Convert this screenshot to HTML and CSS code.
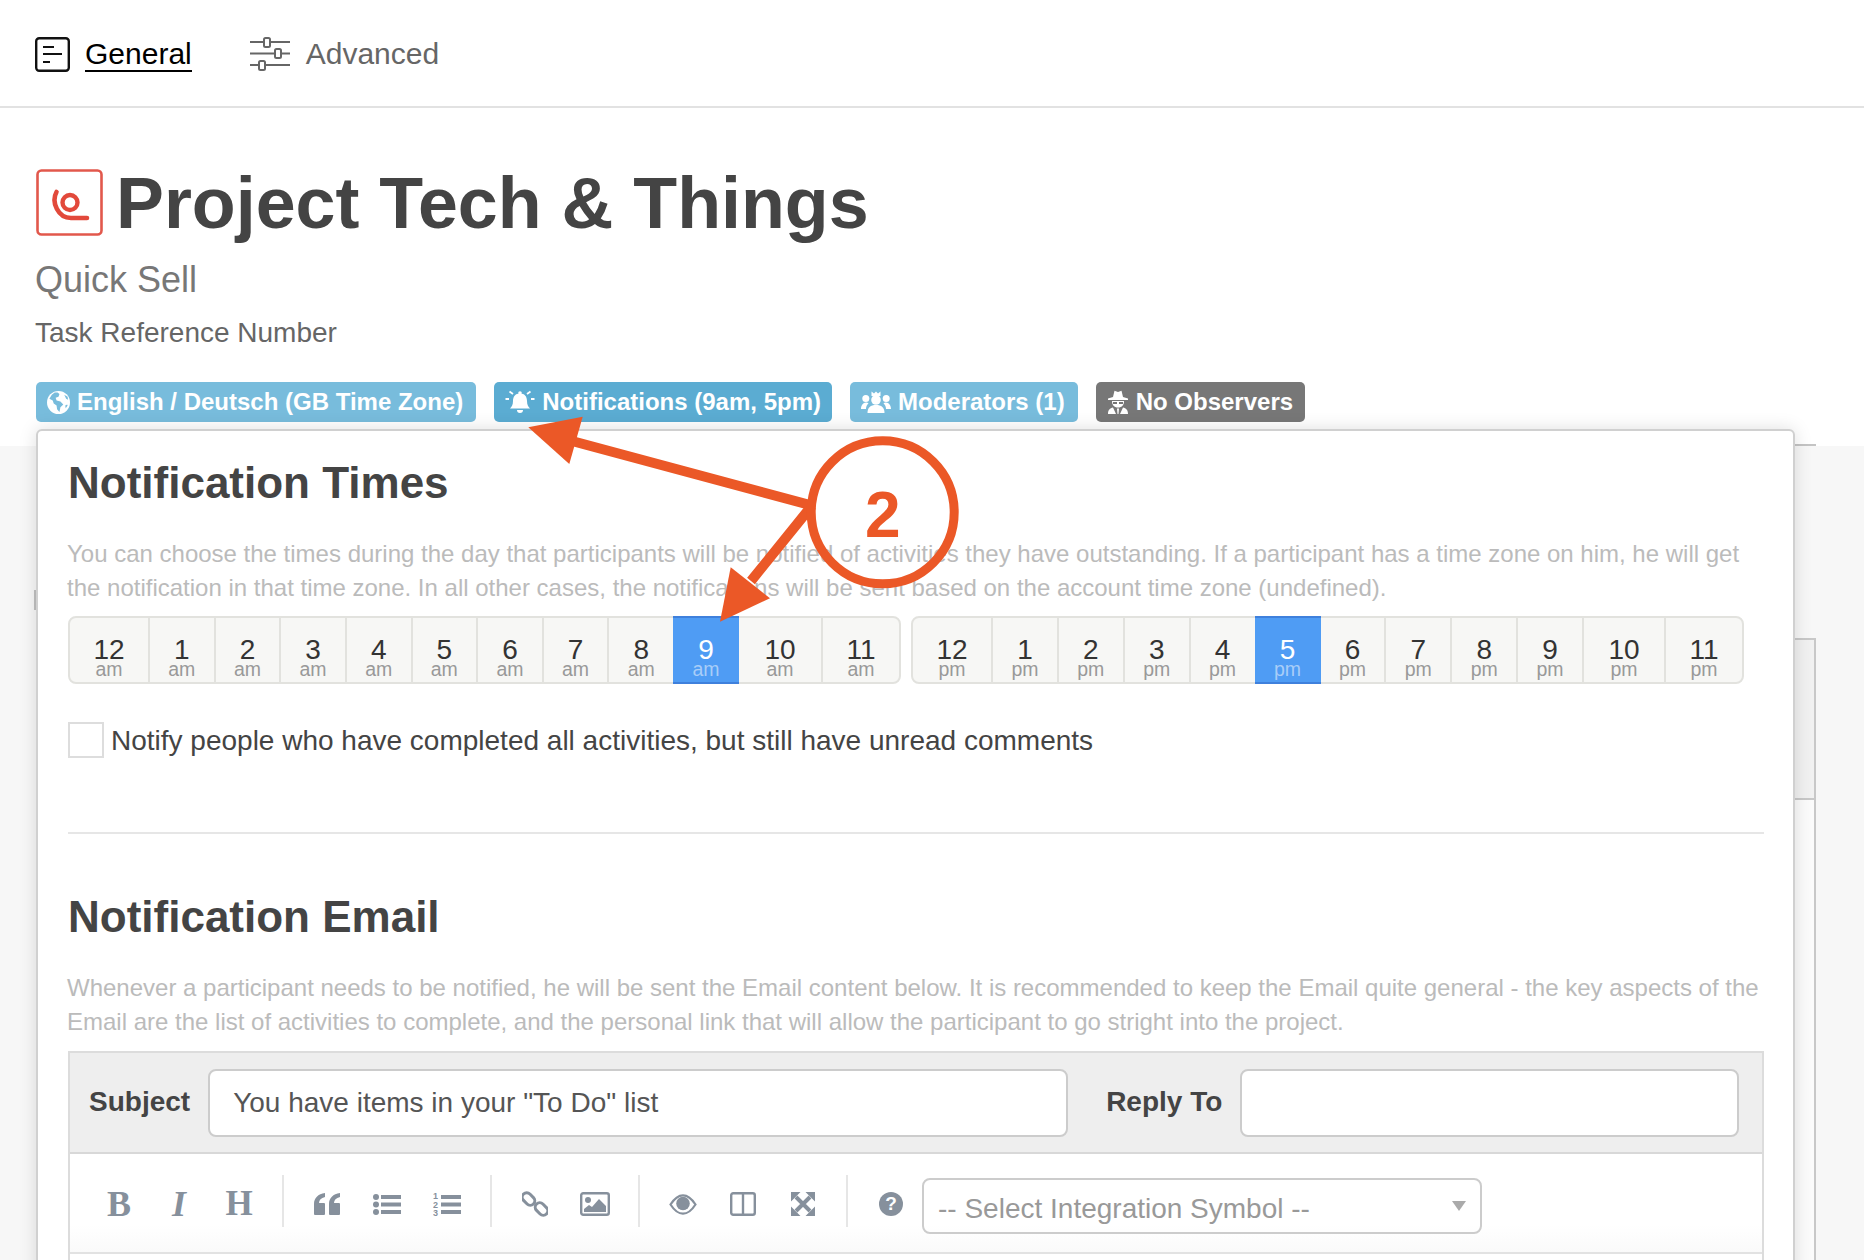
FILE: index.html
```html
<!DOCTYPE html>
<html lang="en">
<head>
<meta charset="utf-8">
<title>Project Tech &amp; Things</title>
<link rel="stylesheet" href="styles.css">
</head>
<body>
<div class="page">
  <nav class="tabs">
    <a class="tab tab-active">
      <svg class="tab-icon" width="35" height="35" viewBox="0 0 35 35"><rect x="1.2" y="1.2" width="32.6" height="32.6" rx="3" fill="none" stroke="#111" stroke-width="2.4"/><path d="M8 10h11M8 17h19M8 25h7" stroke="#111" stroke-width="2.2"/></svg>
      <span class="tab-label">General</span>
    </a>
    <a class="tab tab-muted">
      <svg class="tab-icon" width="40" height="35" viewBox="0 0 40 35"><path d="M0 5h14M20 5h20M0 16.5h25M31 16.5h9M0 28h9M15 28h25" stroke="#666" stroke-width="2"/><rect x="14" y="1" width="6" height="9" rx="1.5" fill="#fff" stroke="#666" stroke-width="2"/><rect x="25" y="12" width="6" height="9" rx="1.5" fill="#fff" stroke="#666" stroke-width="2"/><rect x="9" y="24" width="6" height="9" rx="1.5" fill="#fff" stroke="#666" stroke-width="2"/></svg>
      <span class="tab-label">Advanced</span>
    </a>
  </nav>

  <header class="head">
    <div class="title-row">
      <svg class="logo" width="67" height="67" viewBox="0 0 67 67"><rect x="1.5" y="1.5" width="64" height="64" rx="4" fill="#fff" stroke="#e2584c" stroke-width="2.6"/><circle cx="34" cy="33.5" r="7.5" fill="none" stroke="#e2493b" stroke-width="4.4"/><path d="M20.5 23C15 33 22 49 35 49H51" fill="none" stroke="#e2493b" stroke-width="4.6" stroke-linecap="round"/></svg>
      <h1 class="title">Project Tech &amp; Things</h1>
    </div>
    <div class="subtitle">Quick Sell</div>
    <div class="refnum">Task Reference Number</div>
    <div class="badges">
      <span class="badge badge-light badge-lang">
        <svg class="badge-icon" width="23" height="23" viewBox="0 0 24 24"><circle cx="12" cy="12" r="12" fill="#fff"/><path d="M8 1.5 5 4 2.5 8 6 10l1 3 3 2 .5 4 2.5 3 1-5 3-3-3-3-4-1-1-3 3-1 1-3-2-1.500zM18 4l2 4 2 1-.5-3zM19 15l2-1 .5 1-2 3z" fill="#78bcdc"/></svg>
        English / Deutsch (GB Time Zone)
      </span>
      <span class="badge badge-active">
        <svg class="badge-icon" width="30" height="24" viewBox="0 0 30 24"><circle cx="15" cy="3" r="1.800" fill="#fff"/><path d="M15 3.500c-5 0-7 3.500-7 7.500 0 4-1.500 6-3 7.500h20c-1.500-1.500-3-3.500-3-7.500 0-4-2-7.500-7-7.500z" fill="#fff"/><path d="M12 20h6a3 3 0 0 1-6 0z" fill="#fff"/><path d="M4.500 1.500 8 4M25.500 1.500 22 4M.5 9H4M26 9h3.500" stroke="#fff" stroke-width="1.800"/></svg>
        Notifications (9am, 5pm)
      </span>
      <span class="badge badge-light badge-mods">
        <svg class="badge-icon" width="30" height="24" viewBox="0 0 30 23"><path d="M10.500 1 13 3l2-2 2 2 2.500-2v4.500h-9z" fill="#fff"/><circle cx="15" cy="9.500" r="4.800" fill="#fff"/><path d="M6.500 22.500c0-5.500 3-8 8.500-8s8.500 2.500 8.500 8z" fill="#fff"/><circle cx="4.800" cy="8" r="3.500" fill="#fff"/><circle cx="25.200" cy="8" r="3.500" fill="#fff"/><path d="M0 18.500c0-3.500 2-6.500 5-6.500 1 0 2 .3 2.500.8C6 14.500 5 16 5 18.500zM30 18.500c0-3.500-2-6.500-5-6.500-1 0-2 .3-2.500.8C24 14.500 25 16 25 18.500z" fill="#fff"/></svg>
        Moderators (1)
      </span>
      <span class="badge badge-gray">
        <svg class="badge-icon" width="22" height="24" viewBox="0 0 22 24"><path d="M6 7 7.500.8 11 2l3.500-1.200L16 7l5 1.500V10H1V8.500z" fill="#fff"/><path d="M5 11h12c0 4-2 6.500-6 6.500S5 15 5 11z" fill="#fff"/><path d="M6 12h4v2H6zM12 12h4v2h-4z" fill="#777"/><path d="M1 24c0-4 2-6 5-6.500l3 6.500zM21 24c0-4-2-6-5-6.500L13 24zM10 18.500h2L11.500 24h-1z" fill="#fff"/></svg>
        No Observers
      </span>
    </div>
  </header>

  <div class="panel">
    <div class="panel-rule"></div>
    <div class="panel-tick"></div>
    <div class="panel-card">
      <div class="panel-card-head"></div>
      <div class="panel-card-body"></div>
    </div>
  </div>

  <section class="popover">
    <h2 class="pop-title">Notification Times</h2>
    <p class="pop-text">You can choose the times during the day that participants will be notified of activities they have outstanding. If a participant has a time zone on him, he will get the notification in that time zone. In all other cases, the notifications will be sent based on the account time zone (undefined).</p>

    <div class="hours">
      <div class="hour-group">
        <div class="hour w-first"><b>12</b><i>am</i></div>
        <div class="hour"><b>1</b><i>am</i></div>
        <div class="hour"><b>2</b><i>am</i></div>
        <div class="hour"><b>3</b><i>am</i></div>
        <div class="hour"><b>4</b><i>am</i></div>
        <div class="hour"><b>5</b><i>am</i></div>
        <div class="hour"><b>6</b><i>am</i></div>
        <div class="hour"><b>7</b><i>am</i></div>
        <div class="hour"><b>8</b><i>am</i></div>
        <div class="hour selected"><b>9</b><i>am</i></div>
        <div class="hour w-ten"><b>10</b><i>am</i></div>
        <div class="hour w-eleven"><b>11</b><i>am</i></div>
      </div>
      <div class="hour-group">
        <div class="hour w-first"><b>12</b><i>pm</i></div>
        <div class="hour"><b>1</b><i>pm</i></div>
        <div class="hour"><b>2</b><i>pm</i></div>
        <div class="hour"><b>3</b><i>pm</i></div>
        <div class="hour"><b>4</b><i>pm</i></div>
        <div class="hour selected"><b>5</b><i>pm</i></div>
        <div class="hour"><b>6</b><i>pm</i></div>
        <div class="hour"><b>7</b><i>pm</i></div>
        <div class="hour"><b>8</b><i>pm</i></div>
        <div class="hour"><b>9</b><i>pm</i></div>
        <div class="hour w-ten"><b>10</b><i>pm</i></div>
        <div class="hour w-eleven"><b>11</b><i>pm</i></div>
      </div>
    </div>

    <div class="check-row">
      <span class="checkbox"></span>
      <span class="check-label">Notify people who have completed all activities, but still have unread comments</span>
    </div>

    <hr class="divider">

    <h2 class="pop-title">Notification Email</h2>
    <p class="pop-text">Whenever a participant needs to be notified, he will be sent the Email content below. It is recommended to keep the Email quite general - the key aspects of the Email are the list of activities to complete, and the personal link that will allow the participant to go stright into the project.</p>

    <div class="editor">
      <div class="editor-head">
        <label class="field-label">Subject</label>
        <div class="field field-subject">You have items in your "To Do" list</div>
        <label class="field-label field-label-reply">Reply To</label>
        <div class="field field-reply"></div>
      </div>
      <div class="toolbar">
        <span class="tool tool-serif tool-bold">B</span>
        <span class="tool tool-serif tool-italic">I</span>
        <span class="tool tool-serif tool-h">H</span>
        <span class="tool-sep"></span>
        <span class="tool"><svg width="26" height="22" viewBox="0 0 26 22" fill="#86909c"><path d="M1 22a1 1 0 0 1-1-1V11C0 5 4 1 11 0v4C7 5 5 7 5 10h5a1 1 0 0 1 1 1v10a1 1 0 0 1-1 1z"/><path d="M16 22a1 1 0 0 1-1-1V11c0-6 4-10 11-11v4c-4 1-6 3-6 6h5a1 1 0 0 1 1 1v10a1 1 0 0 1-1 1z"/></svg></span>
        <span class="tool"><svg width="28" height="21" viewBox="0 0 28 21" fill="#86909c"><circle cx="3" cy="3" r="3"/><circle cx="3" cy="10.500" r="3"/><circle cx="3" cy="18" r="3"/><rect x="8" y="1" width="20" height="4"/><rect x="8" y="8.500" width="20" height="4"/><rect x="8" y="16" width="20" height="4"/></svg></span>
        <span class="tool"><svg width="28" height="27" viewBox="0 0 28 27" fill="#86909c"><text class="ol-num" x="0" y="8">1</text><text class="ol-num" x="0" y="16.500">2</text><text class="ol-num" x="0" y="25">3</text><rect x="8" y="4" width="20" height="4"/><rect x="8" y="11.500" width="20" height="4"/><rect x="8" y="19" width="20" height="4"/></svg></span>
        <span class="tool-sep"></span>
        <span class="tool"><svg width="26" height="26" viewBox="0 0 26 26" fill="none" stroke="#86909c" stroke-width="3"><rect x="-.5" y="3.500" width="14" height="9" rx="4.500" transform="rotate(45 6.500 8)"/><rect x="12.500" y="13.500" width="14" height="9" rx="4.500" transform="rotate(45 19.500 18)"/></svg></span>
        <span class="tool"><svg width="30" height="24" viewBox="0 0 30 24"><rect x="1.200" y="1.200" width="27.600" height="21.600" rx="2" fill="none" stroke="#86909c" stroke-width="2.400"/><circle cx="8" cy="8" r="3" fill="#86909c"/><path d="M4 20v-3l5-4 3 2 7-8 7 7v6z" fill="#86909c"/></svg></span>
        <span class="tool-sep"></span>
        <span class="tool"><svg width="28" height="21" viewBox="0 0 28 21"><path d="M1.500 10.500C6 3.500 10.500 1.300 14 1.300s8 2.200 12.500 9.200C22 17.500 17.500 19.700 14 19.700S6 17.500 1.500 10.500z" fill="none" stroke="#86909c" stroke-width="2.200"/><circle cx="14" cy="9.500" r="6.800" fill="#86909c"/></svg></span>
        <span class="tool"><svg width="26" height="24" viewBox="0 0 26 24" fill="none" stroke="#86909c" stroke-width="2.400"><rect x="1.200" y="1.200" width="23.600" height="21.600" rx="2"/><path d="M13 1v22"/></svg></span>
        <span class="tool"><svg width="24" height="24" viewBox="0 0 24 24"><path d="M5 5 19 19M19 5 5 19" stroke="#86909c" stroke-width="4"/><path d="M0 0h9.500L0 9.500zM24 0h-9.500L24 9.500zM0 24h9.500L0 14.500zM24 24h-9.500L24 14.500z" fill="#86909c"/></svg></span>
        <span class="tool-sep"></span>
        <span class="tool tool-help">?</span>
        <div class="select">
          <span class="select-text">-- Select Integration Symbol --</span>
          <span class="select-arrow"></span>
        </div>
      </div>
      <div class="editor-body"></div>
    </div>
  </section>

  <svg class="annotation" width="1864" height="1260" viewBox="0 0 1864 1260">
    <g fill="#eb5827" stroke="none">
      <path d="M528.300 427.300 582.700 416.700 569.300 464z"/>
      <path d="M720 621.700 730.700 567.300 770 598.300z"/>
    </g>
    <path d="M572 441 812 505.500M751 581 812 505.500" fill="none" stroke="#eb5827" stroke-width="10"/>
    <circle cx="882.700" cy="512.300" r="71.500" fill="none" stroke="#eb5827" stroke-width="9"/>
    <text class="anno-num" x="882.700" y="537">2</text>
  </svg>
</div>
</body>
</html>
```
FILE: styles.css
```css
* { box-sizing: border-box; }
html, body { margin: 0; padding: 0; }
body {
  background: #fff;
  font-family: "Liberation Sans", Arial, sans-serif;
  color: #444;
}
.page {
  position: relative;
  width: 1864px;
  height: 1260px;
  overflow: hidden;
  display: flex;
  flex-direction: column;
}

/* Tabs */
.tabs {
  flex: none;
  height: 108px;
  padding: 36px 0 0 35px;
  display: flex;
  align-items: flex-start;
  gap: 58px;
  border-bottom: 2px solid #e2e2e2;
}
.tab { display: flex; align-items: center; gap: 15px; height: 36px; }
.tab-muted { gap: 16px; }
.tab-label { font-size: 30px; line-height: 36px; height: 36px; }
.tab-active .tab-label { color: #000; border-bottom: 2px solid #000; }
.tab-muted .tab-label { color: #666; }
.tab-icon { flex: none; }

/* Head */
.head { flex: none; height: 338px; padding: 61px 0 0 36px; }
.title-row { display: flex; align-items: center; gap: 13px; height: 67px; }
.logo { flex: none; }
.title {
  margin: 0;
  padding-top: 2px;
  font-size: 71.800px;
  line-height: 67px;
  font-weight: 700;
  color: #444;
}
.subtitle { margin: 24px 0 0 -1px; font-size: 36px; line-height: 40px; color: #777; }
.refnum { margin: 16px 0 0 -1px; padding-top: 1px; font-size: 28px; line-height: 32px; color: #666; }
.badges { margin-top: 33px; display: flex; gap: 18px; }
.badge {
  display: inline-flex;
  align-items: center;
  gap: 7px;
  height: 40px;
  padding: 0 12px 0 11px;
  border-radius: 5px;
  color: #fff;
  font-size: 24px;
  font-weight: 700;
  white-space: nowrap;
}
.badge-active { background: #5bacd2; padding-right: 11px; }
.badge-light { background: #78bcdc; }
.badge-lang { padding-right: 13px; }
.badge-mods { padding-right: 13px; }
.badge-gray { background: #777; }
.badge-icon { flex: none; }

/* Panel behind the popover */
.panel { flex: 1; background: #f7f7f7; display: flex; flex-direction: column; align-items: flex-start; }
.panel-rule { width: 116px; height: 2px; margin: -2px 0 0 1700px; background: #c4c4c4; }
.panel-tick { width: 2px; height: 20px; margin: 144px 0 0 34px; background: #c0c0c0; }
.panel-card { width: 116px; margin: 28px 0 0 1700px; flex: 1; display: flex; flex-direction: column; border: 2px solid #c8c8c8; border-width: 2px 2px 0 0; }
.panel-card-head { height: 160px; background: #f1f1f1; border-bottom: 2px solid #c8c8c8; }
.panel-card-body { flex: 1; background: #fbfbfb; }

/* Popover */
.popover {
  position: absolute;
  left: 36px;
  top: 429px;
  width: 1759px;
  height: 900px;
  padding: 26px 29px 0 30px;
  background: #fff;
  border: 2px solid #d0d0d0;
  border-radius: 6px;
  box-shadow: 0 0 18px rgba(0, 0, 0, .13);
}
.pop-title { margin: 0; height: 52px; font-size: 44px; line-height: 52px; font-weight: 700; color: #444; }
.pop-text { margin: 28px 0 0 -1px; font-size: 24px; line-height: 34px; color: #bbb; }

.hours { margin-top: 11px; padding-right: 20px; display: flex; gap: 10px; }
.hour-group {
  flex: 1;
  display: flex;
  height: 68px;
  background: #f7f7f5;
  border: 2px solid #e2e2de;
  border-radius: 8px;
}
.hour {
  flex: 1 1 0;
  padding-top: 21px;
  display: flex;
  flex-direction: column;
  align-items: center;
  border-left: 2px solid #e2e2de;
}
.hour:first-child { border-left: 0; }
.hour.w-first { flex: 0 0 78px; }
.hour.w-ten { flex: 0 0 82px; }
.hour.w-eleven { flex: 0 0 78px; }
.hour b { font-size: 28px; line-height: 21px; font-weight: 400; color: #333; }
.hour i { margin-top: 1px; font-size: 19.500px; line-height: 16px; font-style: normal; color: #999; }
.hour.selected {
  flex: 0 0 66px;
  margin: -2px 0;
  padding-top: 21px;
  background: #4f9cf4;
  border: 0;
  border-top: 2px solid #3f80dc;
  border-bottom: 2px solid #3f80dc;
}
.hour.selected + .hour { border-left: 0; }
.hour.selected b { color: #fff; }
.hour.selected i { color: #a8cdf8; }

.check-row { margin-top: 38px; display: flex; align-items: center; gap: 7px; height: 35px; }
.checkbox { flex: none; width: 36px; height: 36px; border: 2px solid #ddd; background: #fff; }
.check-label { padding-top: 2px; font-size: 28px; color: #444; white-space: nowrap; }

.divider { margin: 75px 0 57px; height: 2px; border: 0; background: #e6e6e6; }

/* Editor */
.editor { margin-top: 12px; border: 2px solid #dcdcdc; border-bottom: 0; }
.editor-head {
  height: 101px;
  padding: 15px 23px 15px 19px;
  display: flex;
  align-items: center;
  background: #eee;
  border-bottom: 2px solid #d8d8d8;
}
.field-label { flex: none; margin: -2px 18px 0 0; font-size: 28px; font-weight: 700; color: #444; }
.field-label-reply { margin-left: 38px; }
.field {
  height: 68px;
  padding: 0 23px;
  display: flex;
  align-items: center;
  background: #fff;
  border: 2px solid #ccc;
  border-radius: 8px;
  font-size: 28px;
  color: #555;
}
.field-subject { flex: none; width: 860px; }
.field-reply { flex: 1; }

.toolbar {
  height: 100px;
  padding: 2px 0 0 19px;
  display: flex;
  align-items: center;
  background: linear-gradient(#fff 72%, #fafafa);
  border-bottom: 2px solid #e2e2e2;
}
.tool {
  flex: none;
  width: 60px;
  display: flex;
  align-items: center;
  justify-content: center;
  color: #86909c;
}
.tool-serif { font-family: "Liberation Serif", "Times New Roman", serif; font-size: 36px; line-height: 36px; }
.tool-bold { font-weight: 700; }
.tool-italic { font-style: italic; font-weight: 700; }
.tool-h { font-size: 35px; font-weight: 700; }
.tool-sep { flex: none; width: 2px; height: 52px; margin: -6px 13px 0; background: #e6e6e6; }
.ol-num { font-family: "Liberation Sans", Arial, sans-serif; font-size: 9px; font-weight: 700; }
.tool-help {
  width: 24px;
  height: 24px;
  margin: 0 18px;
  border-radius: 50%;
  background: #86909c;
  color: #fff;
  font-size: 19px;
  font-weight: 700;
}
.select {
  flex: none;
  width: 560px;
  height: 56px;
  margin: 4px 0 0 1px;
  padding: 0 14px;
  display: flex;
  align-items: center;
  justify-content: space-between;
  border: 2px solid #ccc;
  border-radius: 8px;
  font-size: 28px;
  color: #999;
  white-space: nowrap;
}
.select-text { padding-top: 5px; }
.select-arrow { width: 0; height: 0; border-left: 7px solid transparent; border-right: 7px solid transparent; border-top: 10px solid #aaa; }
.editor-body { height: 200px; }

/* Annotation */
.annotation { position: absolute; left: 0; top: 0; pointer-events: none; }
.anno-num { font-family: "Liberation Sans", Arial, sans-serif; font-size: 64px; font-weight: 700; fill: #eb5827; text-anchor: middle; }
```
